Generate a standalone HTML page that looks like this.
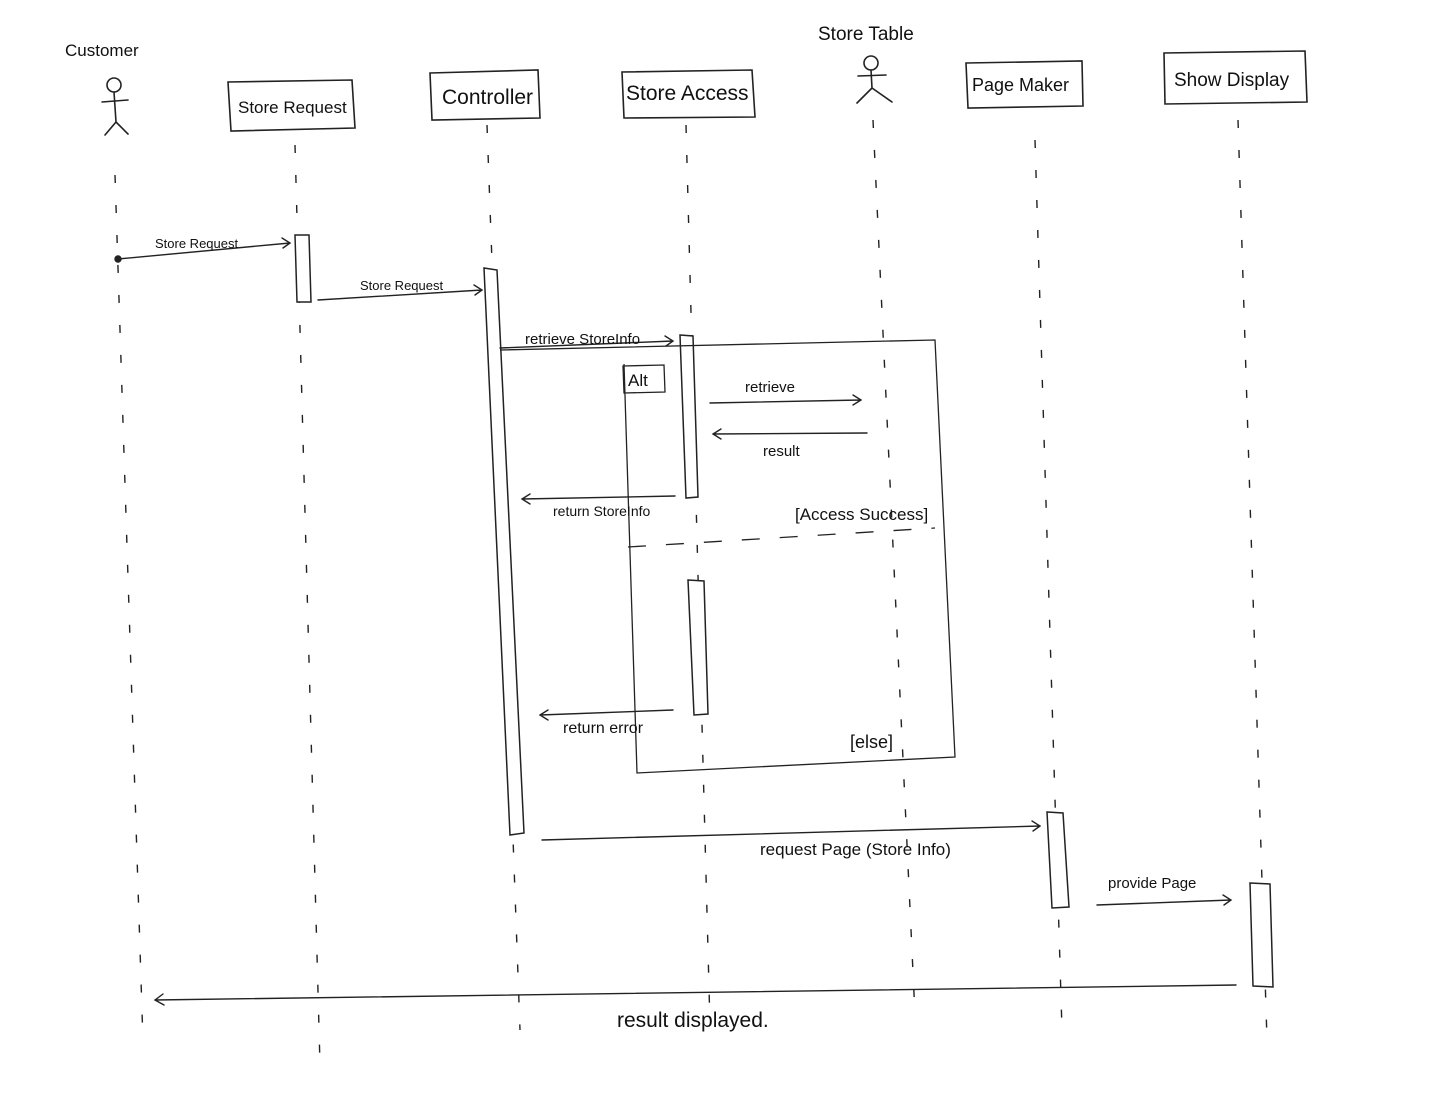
<!DOCTYPE html>
<html><head><meta charset="utf-8"><style>
html,body{margin:0;padding:0;background:#fff;}
svg{display:block;}
text{font-family:"Liberation Sans",sans-serif;fill:#111;}
</style></head><body>
<svg width="1440" height="1118" viewBox="0 0 1440 1118" xmlns="http://www.w3.org/2000/svg">
<g stroke="#222" stroke-width="1.6" fill="none" stroke-linecap="round">
<circle cx="114" cy="85" r="7"/><path d="M114 92 L116 122 M102 102 L128 100 M116 122 L105 135 M116 122 L128 134"/>
<circle cx="871" cy="63" r="7"/><path d="M871 70 L872 88 M858 76 L886 75 M872 88 L857 103 M872 88 L892 102"/>
<path d="M228 82 L352 80 L355 128 L231 131 Z"/>
<path d="M430 73 L538 70 L540 118 L432 120 Z"/>
<path d="M622 72 L752 70 L755 117 L624 118 Z"/>
<path d="M966 63 L1082 61 L1083 106 L968 108 Z"/>
<path d="M1164 53 L1305 51 L1307 102 L1165 104 Z"/>
</g>
<g stroke="#222" stroke-width="1.4" fill="none" stroke-dasharray="8 22">
<path d="M115 175 L143 1042"/>
<path d="M295 145 L320 1065"/>
<path d="M487 125 L520 1030"/>
<path d="M686 125 L710 1025"/>
<path d="M873 120 L915 1015"/>
<path d="M1035 140 L1062 1030"/>
<path d="M1238 120 L1267 1040"/>
</g>
<g stroke="#222" stroke-width="1.5" fill="#fff">
<path d="M295 235 L309 235 L311 302 L297 302 Z"/>
<path d="M484 268 L497 270 L524 833 L510 835 Z"/>
<path d="M680 335 L693 336 L698 497 L686 498 Z"/>
<path d="M688 580 L704 581 L708 714 L694 715 Z"/>
<path d="M1047 812 L1063 813 L1069 907 L1052 908 Z"/>
<path d="M1250 883 L1270 884 L1273 987 L1253 986 Z"/>
</g>
<g stroke="#222" stroke-width="1.3" fill="none">
<path d="M500 350 L935 340 L955 757 L637 773 L624 364"/>
<path d="M623 366 L664 365 L665 392 L624 393 Z"/>
<path d="M628 547 L935 528" stroke-dasharray="18 20"/>
</g>
<g stroke="#222" stroke-width="1.4" fill="none" stroke-linecap="round">
<circle cx="118" cy="259" r="3" fill="#222"/>
<path d="M118 259 L290 243 M282 238 L290 243 L283 248"/>
<path d="M318 300 L482 290 M474 285 L482 290 L475 295"/>
<path d="M500 348 L673 341 M665 336 L673 341 L666 346"/>
<path d="M710 403 L861 400 M853 395 L861 400 L853 405"/>
<path d="M867 433 L713 434 M721 429 L713 434 L721 439"/>
<path d="M675 496 L522 499 M530 494 L522 499 L530 504"/>
<path d="M673 710 L540 715 M548 710 L540 715 L548 720"/>
<path d="M542 840 L1040 826 M1032 821 L1040 826 L1033 831"/>
<path d="M1097 905 L1231 900 M1223 895 L1231 900 L1224 905"/>
<path d="M1236 985 L155 1000 M163 994 L155 1000 L164 1005"/>
</g>
<g font-size="18">
<text x="65" y="56" font-size="17">Customer</text>
<text x="818" y="40" font-size="19">Store Table</text>
<text x="238" y="113" font-size="17">Store Request</text>
<text x="442" y="104" font-size="21">Controller</text>
<text x="626" y="100" font-size="21">Store Access</text>
<text x="972" y="91" font-size="18">Page Maker</text>
<text x="1174" y="86" font-size="19">Show Display</text>
<text x="155" y="248" font-size="13">Store Request</text>
<text x="360" y="290" font-size="13">Store Request</text>
<text x="525" y="344" font-size="15">retrieve StoreInfo</text>
<text x="628" y="386" font-size="17">Alt</text>
<text x="745" y="392" font-size="15">retrieve</text>
<text x="763" y="456" font-size="15">result</text>
<text x="553" y="516" font-size="14">return StoreInfo</text>
<text x="795" y="520" font-size="17">[Access Success]</text>
<text x="563" y="733" font-size="16">return error</text>
<text x="850" y="748" font-size="18">[else]</text>
<text x="760" y="855" font-size="17">request Page (Store Info)</text>
<text x="1108" y="888" font-size="15">provide Page</text>
<text x="617" y="1027" font-size="21">result  displayed.</text>
</g>
</svg>
</body></html>
